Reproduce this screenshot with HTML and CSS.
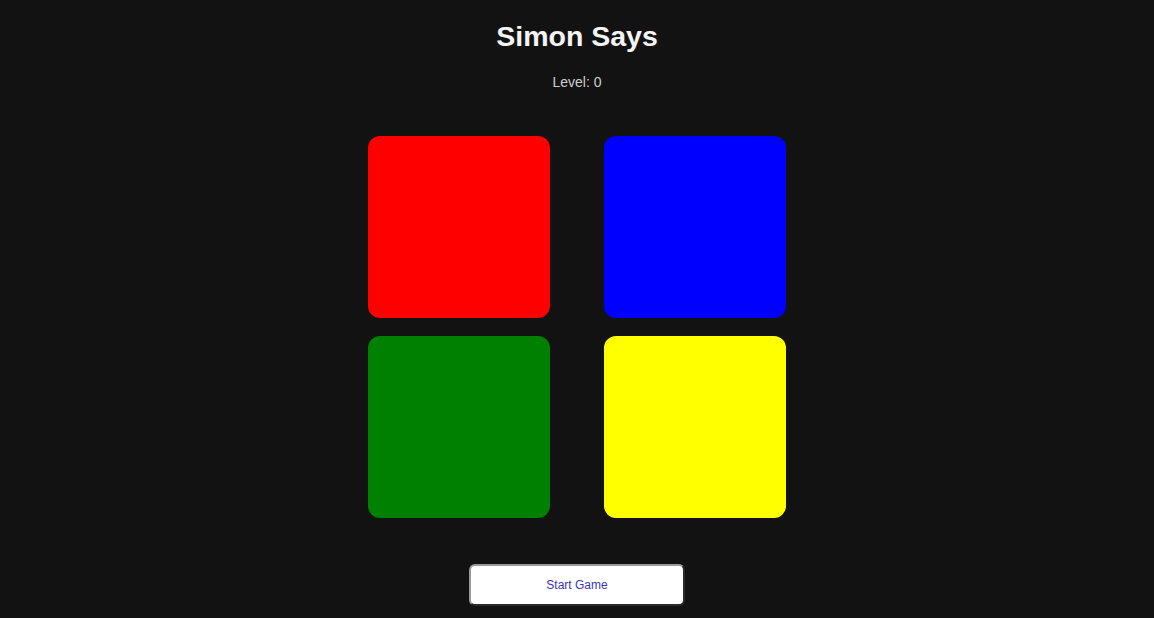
FILE: index.html
```html
<!DOCTYPE html>
<html>
<head>
<meta charset="utf-8">
<title>Simon Says</title>
<link rel="stylesheet" href="styles.css">
</head>
<body>
<main class="app">
  <h1 class="title">Simon Says</h1>
  <p class="level">Level: 0</p>
  <div class="board">
    <div class="pad pad-red"></div>
    <div class="pad pad-blue"></div>
    <div class="pad pad-green"></div>
    <div class="pad pad-yellow"></div>
  </div>
  <button class="start">Start Game</button>
</main>
</body>
</html>
```
FILE: styles.css
```css
html, body {
  margin: 0;
  padding: 0;
  background: #131212;
  height: 100%;
  overflow: hidden;
}
.app {
  display: flex;
  flex-direction: column;
  align-items: center;
  font-family: "Liberation Sans", Arial, sans-serif;
  padding-top: 20px;
}
.title {
  margin: 0;
  font-size: 28.5px;
  font-weight: bold;
  line-height: 32px;
  color: #f4f4f4;
}
.level {
  margin: 22px 0 0;
  font-size: 14px;
  line-height: 16px;
  color: #cfcfcf;
}
.board {
  margin-top: 46px;
  display: grid;
  grid-template-columns: 182px 182px;
  grid-auto-rows: 182px;
  column-gap: 54px;
  row-gap: 18px;
}
.pad {
  border-radius: 12px;
}
.pad-red { background: #ff0000; }
.pad-blue { background: #0000ff; }
.pad-green { background: #008000; }
.pad-yellow { background: #ffff00; }
.start {
  margin-top: 46px;
  width: 216px;
  height: 42px;
  background: #ffffff;
  border: 2px solid #9a9a9a;
  border-right-color: #2a2a2a;
  border-bottom-color: #2a2a2a;
  border-radius: 6px;
  font-family: "Liberation Sans", Arial, sans-serif;
  font-size: 12px;
  color: #3a36b8;
  padding: 0;
}
```
